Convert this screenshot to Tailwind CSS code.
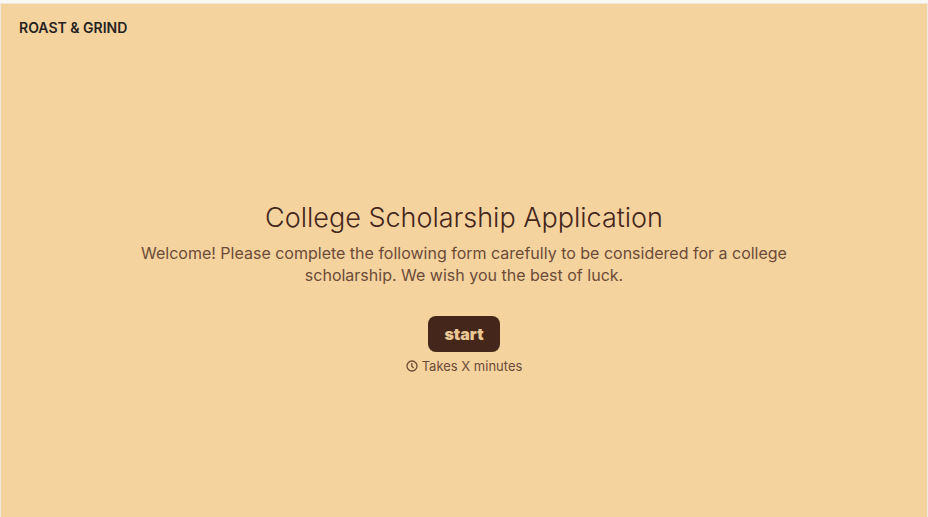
<!DOCTYPE html>
<html lang="en">
<head>
    <meta charset="UTF-8">
    <meta name="viewport" content="width=device-width, initial-scale=1.0">
    <title>College Scholarship Application</title>
    <script src="https://cdn.jsdelivr.net/npm/@tailwindcss/browser@4"></script>
</head>
<body class="bg-[#faf8f5] font-[Inter,sans-serif]">

    <div class="min-h-screen flex flex-col pt-[3px]">
        <div class="flex-1 flex flex-col border border-b-0 border-[#f0e8dc] bg-[#f4d39f]">

            <!-- Brand -->
            <header class="h-12 px-[18px] flex items-center">
                <span class="text-[14px] leading-5 font-semibold text-[#26221f]">ROAST &amp; GRIND</span>
            </header>

            <!-- Welcome screen -->
            <main class="flex-1 flex flex-col items-center justify-center px-6 pt-1.5 text-center">
                <h1 class="text-[27px] leading-9 font-light text-[#44261b]">College Scholarship Application</h1>
                <p class="mt-1.5 max-w-[660px] text-[16px] leading-[22px] text-[#6c4b37]">Welcome! Please complete the following form carefully to be considered for a college scholarship. We wish you the best of luck.</p>
                <button type="button" class="mt-7.5 h-9 w-[72px] rounded-lg bg-[#44261b] text-[16px] leading-5 font-black text-[#eac896]">start</button>
                <div class="mt-1 flex items-center gap-1 text-[13px] leading-5 text-[#6c4b37]">
                    <svg class="size-3" viewBox="0 0 12 12" fill="none" stroke="currentColor" stroke-width="1.3">
                        <circle cx="6" cy="6" r="5"/>
                        <path d="M5.8 3v3.2l1.8 1.8"/>
                    </svg>
                    <span>Takes X minutes</span>
                </div>
            </main>

        </div>
    </div>

</body>
</html>
